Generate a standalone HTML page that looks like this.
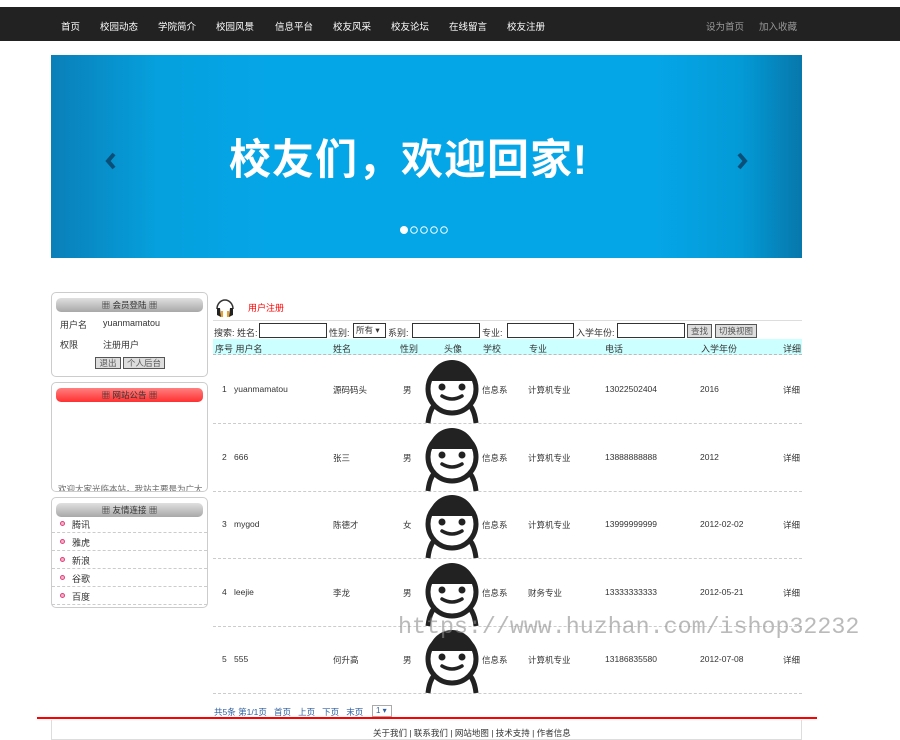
<!DOCTYPE html>
<html><head><meta charset="utf-8">
<style>
*{margin:0;padding:0;box-sizing:border-box}
body{width:900px;height:736px;overflow:hidden;background:#fff;font-family:"Liberation Sans","Noto Sans CJK SC",sans-serif;font-size:9px;color:#333;position:relative}
.a{position:absolute;white-space:nowrap}
.nav{left:0;top:7px;width:900px;height:34px;background:#222;}
.nav span{position:absolute;top:12px;color:#fff;font-size:9.5px}
.banner{left:51px;top:55px;width:751px;height:203px;background:linear-gradient(90deg,#0a7fb8 0%,#05a0dd 14%,#05a6e8 30%,#05a6e8 80%,#039ad6 92%,#0777ab 100%)}
.box{position:absolute;border:1px solid #ccc;border-radius:5px;background:#fff}
.bar{position:absolute;left:4px;right:4px;top:5px;height:14px;border-radius:5px;background:linear-gradient(#e0e0e0,#a8a8a8);text-align:center;font-size:8.5px;line-height:14px;color:#333}
.red{background:linear-gradient(#ff8080,#ff3030)}
.inp{position:absolute;top:323px;height:15px;border:1px solid #333;background:#fff}
.btn{position:absolute;border:1px solid #555;background:#ddd;font-size:8.5px;text-align:center;color:#555}
.row{position:absolute;left:213px;width:589px;border-bottom:1px dashed #ccc;height:68px}
.row span{position:absolute;top:28px;font-size:8.5px;color:#333}
.lk{position:absolute;left:52px;width:155px;height:18px;border-bottom:1px dashed #ccc}
.lk i{position:absolute;left:8px;top:6px;width:5px;height:5px;border:1.5px solid #e0407a;background:#f8b0c8;border-radius:50%}
.lk b{position:absolute;left:20px;top:3px;font-weight:normal;font-size:9px}
</style></head><body>
<div class="a nav">
<span style="left:61px">首页</span><span style="left:100px">校园动态</span><span style="left:158px">学院简介</span><span style="left:216px">校园风景</span><span style="left:275px">信息平台</span><span style="left:333px">校友风采</span><span style="left:391px">校友论坛</span><span style="left:449px">在线留言</span><span style="left:507px">校友注册</span>
<span style="left:706px;color:#999">设为首页</span><span style="left:759px;color:#999">加入收藏</span>
</div>
<div class="a banner">
<div class="a" style="left:178px;top:81px;font-size:42px;font-weight:bold;color:#fff;letter-spacing:1px;line-height:48px">校友们，欢迎回家!</div>
<svg class="a" style="left:52px;top:96px" width="14" height="20"><path d="M11 3 L5 10 L11 17" stroke="#0a4f78" stroke-width="4" fill="none"/></svg>
<svg class="a" style="left:685px;top:96px" width="14" height="20"><path d="M3 3 L9 10 L3 17" stroke="#0a4f78" stroke-width="4" fill="none"/></svg>
<svg class="a" style="left:349px;top:170px" width="52" height="10"><circle cx="4" cy="5" r="4" fill="#fff"/><circle cx="14" cy="5" r="3.3" stroke="#fff" fill="none"/><circle cx="24" cy="5" r="3.3" stroke="#fff" fill="none"/><circle cx="34" cy="5" r="3.3" stroke="#fff" fill="none"/><circle cx="44" cy="5" r="3.3" stroke="#fff" fill="none"/></svg>
</div>

<div class="box" style="left:51px;top:292px;width:157px;height:85px">
<div class="bar">▦ 会员登陆 ▦</div>
<div class="a" style="left:8px;top:25px">用户名</div><div class="a" style="left:51px;top:25px">yuanmamatou</div>
<div class="a" style="left:8px;top:45px">权限</div><div class="a" style="left:51px;top:45px">注册用户</div>
<div class="btn" style="left:43px;top:64px;width:26px;height:12px;line-height:10px">退出</div>
<div class="btn" style="left:71px;top:64px;width:42px;height:12px;line-height:10px">个人后台</div>
</div>
<div class="box" style="left:51px;top:382px;width:157px;height:110px;overflow:hidden">
<div class="bar red">▦ 网站公告 ▦</div>
<div class="a" style="left:6px;top:100px;color:#666;font-size:8.5px">欢迎大家光临本站，我站主要是为广大</div>
</div>
<div class="box" style="left:51px;top:497px;width:157px;height:111px">
<div class="bar">▦ 友情连接 ▦</div>
</div>
<div class="lk" style="top:515px"><i></i><b>腾讯</b></div>
<div class="lk" style="top:533px"><i></i><b>雅虎</b></div>
<div class="lk" style="top:551px"><i></i><b>新浪</b></div>
<div class="lk" style="top:569px"><i></i><b>谷歌</b></div>
<div class="lk" style="top:587px"><i></i><b>百度</b></div>

<svg class="a" style="left:214px;top:293px" width="22" height="26"><path d="M3 16 A8 9 0 0 1 19 16" stroke="#333" stroke-width="1.5" fill="none"/><path d="M3 15 L6 15 L7 24 L3 22Z M19 15 L16 15 L15 24 L19 22Z" fill="#222"/><path d="M7 18 L9 18 L9 24 L7 24Z M13 18 L15 18 L15 24 L13 24Z" fill="#f0a020"/></svg>
<div class="a" style="left:248px;top:301px;color:#f00;font-size:9px">用户注册</div>
<div class="a" style="left:213px;top:320px;width:589px;border-top:1px solid #ddd"></div>
<div class="a" style="left:214px;top:326px">搜索: 姓名:</div>
<div class="inp" style="left:259px;width:68px"></div>
<div class="a" style="left:329px;top:326px">性别:</div>
<div class="inp" style="left:353px;width:33px;font-size:8.5px;padding-left:2px;line-height:13px">所有 ▾</div>
<div class="a" style="left:388px;top:326px">系别:</div>
<div class="inp" style="left:412px;width:68px"></div>
<div class="a" style="left:482px;top:326px">专业:</div>
<div class="inp" style="left:507px;width:67px"></div>
<div class="a" style="left:576px;top:326px">入学年份:</div>
<div class="inp" style="left:617px;width:68px"></div>
<div class="btn" style="left:687px;top:324px;width:25px;height:14px;line-height:12px">查找</div>
<div class="btn" style="left:715px;top:324px;width:42px;height:14px;line-height:12px">切换视图</div>
<div class="a" style="left:213px;top:339px;width:589px;height:16px;background:#ccffff;border-bottom:1px dashed #bbb"></div>
<div class="a" style="left:215px;top:342px">序号 用户名</div><div class="a" style="left:333px;top:342px">姓名</div><div class="a" style="left:400px;top:342px">性别</div><div class="a" style="left:444px;top:342px">头像</div><div class="a" style="left:483px;top:342px">学校</div><div class="a" style="left:529px;top:342px">专业</div><div class="a" style="left:605px;top:342px">电话</div><div class="a" style="left:701px;top:342px">入学年份</div><div class="a" style="left:783px;top:342px">详细</div>

<div class="row" style="top:356px"><span style="left:9px">1</span><span style="left:21px">yuanmamatou</span><span style="left:120px">源码码头</span><span style="left:190px">男</span><span style="left:269px">信息系</span><span style="left:315px">计算机专业</span><span style="left:392px">13022502404</span><span style="left:487px">2016</span><span style="left:570px">详细</span></div>
<div class="row" style="top:424px"><span style="left:9px">2</span><span style="left:21px">666</span><span style="left:120px">张三</span><span style="left:190px">男</span><span style="left:269px">信息系</span><span style="left:315px">计算机专业</span><span style="left:392px">13888888888</span><span style="left:487px">2012</span><span style="left:570px">详细</span></div>
<div class="row" style="top:491px"><span style="left:9px">3</span><span style="left:21px">mygod</span><span style="left:120px">陈德才</span><span style="left:190px">女</span><span style="left:269px">信息系</span><span style="left:315px">计算机专业</span><span style="left:392px">13999999999</span><span style="left:487px">2012-02-02</span><span style="left:570px">详细</span></div>
<div class="row" style="top:559px"><span style="left:9px">4</span><span style="left:21px">leejie</span><span style="left:120px">李龙</span><span style="left:190px">男</span><span style="left:269px">信息系</span><span style="left:315px">财务专业</span><span style="left:392px">13333333333</span><span style="left:487px">2012-05-21</span><span style="left:570px">详细</span></div>
<div class="row" style="top:626px"><span style="left:9px">5</span><span style="left:21px">555</span><span style="left:120px">何升高</span><span style="left:190px">男</span><span style="left:269px">信息系</span><span style="left:315px">计算机专业</span><span style="left:392px">13186835580</span><span style="left:487px">2012-07-08</span><span style="left:570px">详细</span></div>

<svg class="a" style="left:420px;top:355px" width="66" height="340">
<defs><g id="av"><path d="M8 68 Q10 50 20 46 M56 68 Q54 50 44 46" stroke="#222" stroke-width="5" fill="none"/><circle cx="32" cy="34" r="24" fill="#fff" stroke="#222" stroke-width="5"/><path d="M9 28 A23 23 0 0 1 55 28 L55 25 L9 25Z" fill="#222"/><path d="M8 30 A24 24 0 0 1 56 30 L56 26 L8 26Z" fill="#222"/><circle cx="22" cy="32" r="3.5" fill="#222"/><circle cx="42" cy="32" r="3.5" fill="#222"/><path d="M22 41 Q32 47 42 41" stroke="#222" stroke-width="3.5" fill="none" stroke-linecap="round"/></g></defs>
<use href="#av" y="0"/><use href="#av" y="68"/><use href="#av" y="135"/><use href="#av" y="203"/><use href="#av" y="270"/>
</svg>
<div class="a" style="left:398px;top:614px;font-family:'Liberation Mono',monospace;font-size:23.3px;color:rgba(140,140,140,0.6)">https://www.huzhan.com/ishop32232</div>

<div class="a" style="left:214px;top:706px;color:#3060a0;font-size:8.5px">共5条 第1/1页 &nbsp; 首页 &nbsp; 上页 &nbsp; 下页 &nbsp; 末页</div>
<div class="a" style="left:372px;top:705px;width:20px;height:12px;border:1px solid #aaa;font-size:8px;line-height:10px;padding-left:3px;color:#3060a0">1 ▾</div>
<div class="a" style="left:37px;top:717px;width:780px;height:2px;background:#f00"></div>
<div class="a" style="left:51px;top:720px;width:751px;height:20px;border:1px solid #ddd;border-top:none"></div>
<div class="a" style="left:373px;top:727px;font-size:8.5px">关于我们 | 联系我们 | 网站地图 | 技术支持 | 作者信息</div>
</body></html>
